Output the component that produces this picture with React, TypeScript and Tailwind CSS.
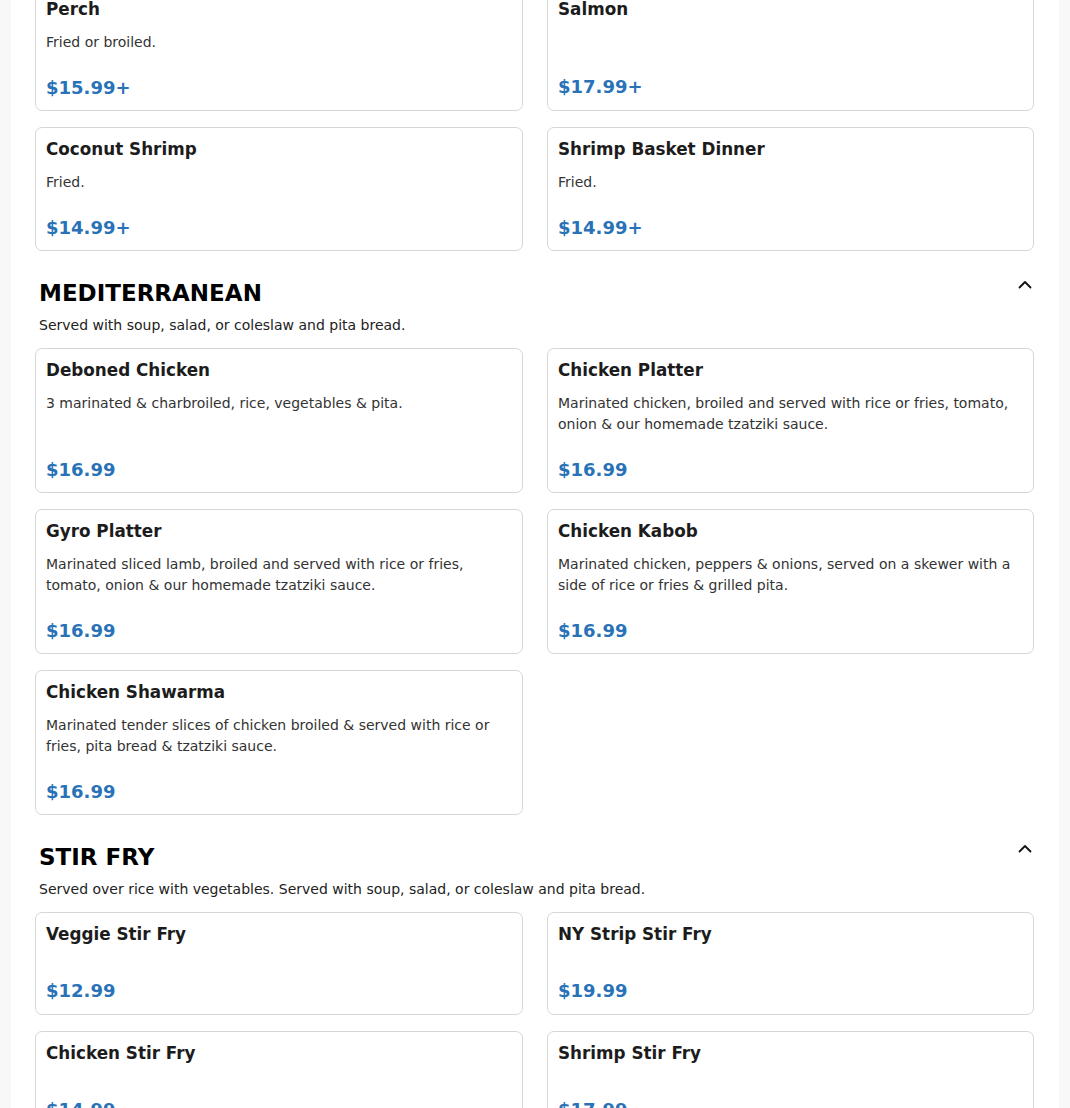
import React from "react";

type Item = { name: string; desc?: string; price: string };

const font = { fontFamily: '"DejaVu Sans", "Liberation Sans", sans-serif' };

function Card({ item }: { item: Item }) {
  return (
    <div
      className={
        item.desc
          ? "flex flex-col rounded-[7px] border border-[#d6d6d6] bg-white px-[10px] pt-[11px] pb-[9px]"
          : "flex flex-col rounded-[7px] border border-[#d6d6d6] bg-white px-[10px] pt-[11px] pb-[10px]"
      }
    >
      <div className="text-[16.8px] font-bold leading-[21px] text-[#1c1c1c]">{item.name}</div>
      {item.desc ? (
        <div className="flex-1 pt-[12px]">
          <p className="text-[14px] leading-[21px] text-[#333333]">{item.desc}</p>
        </div>
      ) : (
        <div className="flex-1 pt-[11px]" />
      )}
      <div className="pt-[22px] text-[18px] font-bold leading-[26px] text-[#2a72b8]">{item.price}</div>
    </div>
  );
}

function Grid({ items, className = "" }: { items: Item[]; className?: string }) {
  return (
    <div className={"grid grid-cols-[488px_487px] gap-x-6 gap-y-4 " + className}>
      {items.map((it) => (
        <Card key={it.name} item={it} />
      ))}
    </div>
  );
}

function Section({ title, sub, items }: { title: string; sub: string; items: Item[] }) {
  return (
    <section className="mt-[28px]">
      <div className="flex items-start justify-between pl-1">
        <h2 className="text-[23px] font-bold leading-[28px] text-black">{title}</h2>
        <svg
          width="14"
          height="9"
          viewBox="0 0 14 9"
          className="mt-[1px] mr-[3px]"
          fill="none"
          stroke="#111"
          strokeWidth="1.8"
          strokeLinecap="round"
          strokeLinejoin="round"
        >
          <path d="M1.5 7.5 7 2l5.5 5.5" />
        </svg>
      </div>
      <p className="mt-2 pl-1 text-[14px] leading-[21px] text-[#222]">{sub}</p>
      <Grid items={items} className="mt-[12px]" />
    </section>
  );
}

export default function App() {
  const seafood: Item[] = [
    { name: "Perch", desc: "Fried or broiled.", price: "$15.99+" },
    { name: "Salmon", price: "$17.99+" },
    { name: "Coconut Shrimp", desc: "Fried.", price: "$14.99+" },
    { name: "Shrimp Basket Dinner", desc: "Fried.", price: "$14.99+" },
  ];
  const med: Item[] = [
    { name: "Deboned Chicken", desc: "3 marinated & charbroiled, rice, vegetables & pita.", price: "$16.99" },
    {
      name: "Chicken Platter",
      desc: "Marinated chicken, broiled and served with rice or fries, tomato, onion & our homemade tzatziki sauce.",
      price: "$16.99",
    },
    {
      name: "Gyro Platter",
      desc: "Marinated sliced lamb, broiled and served with rice or fries, tomato, onion & our homemade tzatziki sauce.",
      price: "$16.99",
    },
    {
      name: "Chicken Kabob",
      desc: "Marinated chicken, peppers & onions, served on a skewer with a side of rice or fries & grilled pita.",
      price: "$16.99",
    },
    {
      name: "Chicken Shawarma",
      desc: "Marinated tender slices of chicken broiled & served with rice or fries, pita bread & tzatziki sauce.",
      price: "$16.99",
    },
  ];
  const stir: Item[] = [
    { name: "Veggie Stir Fry", price: "$12.99" },
    { name: "NY Strip Stir Fry", price: "$19.99" },
    { name: "Chicken Stir Fry", price: "$14.99" },
    { name: "Shrimp Stir Fry", price: "$17.99" },
  ];
  return (
    <div className="h-[1108px] overflow-hidden bg-[#f8f8f8] px-[11px]" style={font}>
      <div className="min-h-full bg-white px-6 pb-10">
        <div className="mt-[-13px]">
          <Grid items={seafood} />
        </div>
        <Section title="MEDITERRANEAN" sub="Served with soup, salad, or coleslaw and pita bread." items={med} />
        <Section
          title="STIR FRY"
          sub="Served over rice with vegetables. Served with soup, salad, or coleslaw and pita bread."
          items={stir}
        />
      </div>
    </div>
  );
}
